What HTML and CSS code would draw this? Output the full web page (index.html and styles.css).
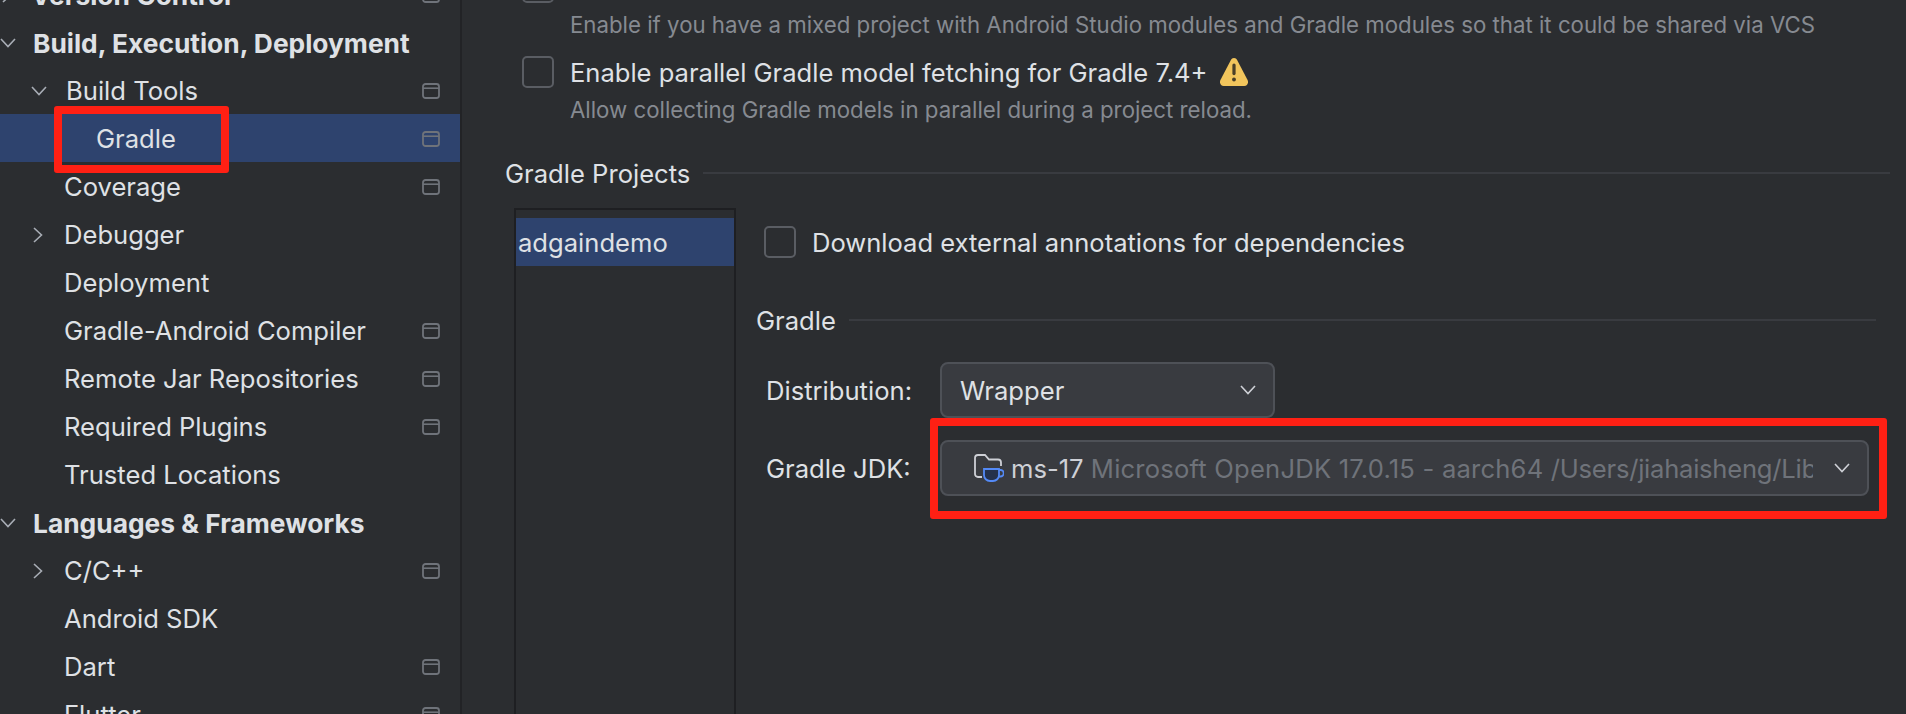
FILE: index.html
```html
<!doctype html>
<html>
  <head>
    <meta charset="UTF-8">
    <title>Settings - Gradle</title>
    <link rel="stylesheet" href="styles.css">
  </head>
  <body>
    <svg class="defs" width="0" height="0">
      <symbol id="chev-down" viewBox="0 0 16 10"><path d="M1 1l7 7.5L15 1" fill="none" stroke="currentColor" stroke-width="1.6"/></symbol>
      <symbol id="chev-right" viewBox="0 0 10 16"><path d="M1 1l7.5 7L1 15" fill="none" stroke="currentColor" stroke-width="1.6"/></symbol>
      <symbol id="scope" viewBox="0 0 18 16"><rect x="1" y="1" width="16" height="14" rx="2.5" fill="none" stroke="currentColor" stroke-width="1.8"/><path d="M1 5.2h16" stroke="currentColor" stroke-width="1.6"/></symbol>
    </svg>

    <nav class="sidebar">
      <div class="tree">
        <div class="row bold"><span class="chev"><svg class="icon-right"><use href="#chev-right"/></svg></span>Version Control<svg class="scope"><use href="#scope"/></svg></div>
        <div class="row bold"><span class="chev"><svg class="icon-down"><use href="#chev-down"/></svg></span>Build, Execution, Deployment</div>
        <div class="row level-1"><span class="chev"><svg class="icon-down"><use href="#chev-down"/></svg></span>Build Tools<svg class="scope"><use href="#scope"/></svg></div>
        <div class="row level-2 selected"><span class="chev"></span>Gradle<svg class="scope"><use href="#scope"/></svg></div>
        <div class="row level-1"><span class="chev"></span>Coverage<svg class="scope"><use href="#scope"/></svg></div>
        <div class="row level-1"><span class="chev"><svg class="icon-right"><use href="#chev-right"/></svg></span>Debugger</div>
        <div class="row level-1"><span class="chev"></span>Deployment</div>
        <div class="row level-1"><span class="chev"></span>Gradle-Android Compiler<svg class="scope"><use href="#scope"/></svg></div>
        <div class="row level-1"><span class="chev"></span>Remote Jar Repositories<svg class="scope"><use href="#scope"/></svg></div>
        <div class="row level-1"><span class="chev"></span>Required Plugins<svg class="scope"><use href="#scope"/></svg></div>
        <div class="row level-1"><span class="chev"></span>Trusted Locations</div>
        <div class="row bold"><span class="chev"><svg class="icon-down"><use href="#chev-down"/></svg></span>Languages &amp; Frameworks</div>
        <div class="row level-1"><span class="chev"><svg class="icon-right"><use href="#chev-right"/></svg></span>C/C++<svg class="scope"><use href="#scope"/></svg></div>
        <div class="row level-1"><span class="chev"></span>Android SDK</div>
        <div class="row level-1"><span class="chev"></span>Dart<svg class="scope"><use href="#scope"/></svg></div>
        <div class="row level-1"><span class="chev"></span>Flutter<svg class="scope"><use href="#scope"/></svg></div>
      </div>
    </nav>

    <main class="content">
      <div class="options">
        <div class="check-row first"><span class="checkbox"></span></div>
        <p class="hint">Enable if you have a mixed project with Android Studio modules and Gradle modules so that it could be shared via VCS</p>
        <div class="check-row spaced">
          <span class="checkbox"></span>
          <span class="check-label">Enable parallel Gradle model fetching for Gradle 7.4+</span>
          <svg class="warning" viewBox="1 1 26 26">
            <path d="M14 1c1.400 0 2.300.8 3 2l9.600 18.500c1.200 2.400-.2 5.500-3 5.500H4.400c-2.800 0-4.200-3.100-3-5.500L11 3c.7-1.200 1.600-2 3-2z" fill="#f2c55c"/>
            <path d="M14 7.500v8" stroke="#4a3f28" stroke-width="3" stroke-linecap="round"/>
            <circle cx="14" cy="21" r="1.800" fill="#4a3f28"/>
          </svg>
        </div>
        <p class="hint">Allow collecting Gradle models in parallel during a project reload.</p>
      </div>

      <h2 class="section-title projects-title">Gradle Projects</h2>

      <div class="projects">
        <div class="project-list">
          <div class="project selected">adgaindemo</div>
        </div>
        <div class="project-settings">
          <div class="check-row external">
            <span class="checkbox"></span>
            <span class="check-label">Download external annotations for dependencies</span>
          </div>
          <h2 class="section-title gradle-title">Gradle</h2>
          <div class="field distribution">
            <label class="field-label">Distribution:</label>
            <div class="combo combo-short">
              <span class="combo-text">Wrapper</span>
              <svg class="combo-arrow"><use href="#chev-down"/></svg>
            </div>
          </div>
          <div class="field jdk">
            <label class="field-label">Gradle JDK:</label>
            <div class="combo combo-wide">
              <svg class="jdk-icon" viewBox="0 0 30 28">
                <path d="M8 23H4a3 3 0 0 1-3-3V4a3 3 0 0 1 3-3h7l4 4.500h9a3 3 0 0 1 3 3V12" fill="none" stroke="#ced0d6" stroke-width="1.800"/>
                <path d="M10 15h15v6a6 6 0 0 1-6 6h-3a6 6 0 0 1-6-6z" fill="#25324d" stroke="#548af7" stroke-width="1.800"/>
                <path d="M25 16h1.500a2.500 2.500 0 0 1 0 6.500H24.500" fill="none" stroke="#548af7" stroke-width="1.800"/>
              </svg>
              <span class="combo-text"><span class="jdk-name">ms-17</span> <span class="jdk-detail">Microsoft OpenJDK 17.0.15 - aarch64 <span class="jdk-path">/Users/jiahaisheng/Library</span></span></span>
              <svg class="combo-arrow"><use href="#chev-down"/></svg>
            </div>
          </div>
        </div>
      </div>
    </main>

    <div class="mark mark-gradle"></div>
    <div class="mark mark-jdk"></div>
  </body>
</html>
```

FILE: styles.css
```css
* {
    box-sizing: border-box;
}

html, body {
    height: 714px;
    margin: 0;
    overflow: hidden;
}

body {
    background: #2b2d30;
    color: #dfe1e5;
    display: flex;
    font-family: Inter, "Liberation Sans", sans-serif;
    font-size: 25.6px;
    position: relative;
}

.defs {
    position: absolute;
}

/* sidebar */
.sidebar {
    border-right: 2px solid #222326;
    flex: 0 0 462px;
    height: 714px;
    overflow: hidden;
}

.tree {
    margin-top: -30px;
}

.row {
    align-items: center;
    display: flex;
    height: 48px;
    padding-right: 20px;
    padding-top: 1px;
}

.row.bold {
    font-size: 26.35px;
    font-weight: 700;
}

.level-1 {
    padding-left: 32px;
}

.level-2 {
    padding-left: 64px;
}

.row.selected, .project.selected {
    background: #2e436e;
}

.chev {
    align-items: center;
    color: #a8adb5;
    display: flex;
    flex: 0 0 14px;
    justify-content: center;
    margin-right: 18px;
}

.bold .chev {
    margin-right: 17px;
}

.level-1 .icon-down, .level-1 .icon-right {
    position: relative;
    left: -1px;
}

.icon-down {
    flex: none;
    height: 10px;
    width: 16px;
}

.icon-right {
    flex: none;
    height: 16px;
    width: 10px;
}

.scope {
    color: #6f737a;
    height: 16px;
    margin-left: auto;
    width: 18px;
}

/* right side */
.content {
    flex: 1;
    min-width: 0;
    padding: 0 16px 0 43px;
}

.options {
    padding-left: 17px;
}

.check-row {
    align-items: center;
    display: flex;
    gap: 16px;
    height: 32px;
}

.check-row.first {
    margin-top: -29px;
}

.check-row.spaced {
    margin-top: 17px;
}

.check-label {
    font-size: 25.55px;
    padding-top: 1px;
}

.checkbox {
    border: 2px solid #5a5d63;
    border-radius: 5px;
    flex: 0 0 32px;
    height: 32px;
}

.warning {
    height: 28px;
    margin-left: -3px;
    width: 28px;
}

.hint {
    color: #868a91;
    font-size: 22.24px;
    line-height: 28px;
    margin: 8px 0 0 48px;
}

.section-title {
    align-items: center;
    display: flex;
    font-size: 25.6px;
    font-weight: 400;
    gap: 13px;
    height: 30px;
    margin: 0;
}

.section-title::after {
    background: #393b40;
    content: "";
    flex: 1;
    height: 2px;
}

.projects-title {
    margin-top: 34px;
}

.projects {
    display: flex;
    margin: 20px 0 0 9px;
}

.project-list {
    border: 2px solid #1e1f22;
    flex: 0 0 222px;
    height: 520px;
    padding-top: 8px;
}

.project {
    align-items: center;
    color: #dfe1e5;
    display: flex;
    height: 48px;
    padding-left: 2px;
    padding-top: 1px;
}

.project-settings {
    flex: 1;
    min-width: 0;
    padding: 18px 14px 0 20px;
}

.external {
    margin-left: 8px;
}

.gradle-title {
    margin-top: 47px;
}

.field {
    align-items: center;
    display: flex;
    padding-left: 10px;
}

.distribution {
    margin-top: 27px;
}

.jdk {
    margin: 22px 7px 0 0;
}

.field-label {
    flex: 0 0 174px;
    padding-top: 1px;
}

.combo {
    align-items: center;
    background: #393b40;
    border: 2px solid #4e5157;
    border-radius: 8px;
    display: flex;
    height: 56px;
}

.combo-short {
    padding-left: 18px;
    width: 335px;
}

.combo-wide {
    flex: 1;
    min-width: 0;
    padding-left: 32px;
}

.combo-text {
    flex: 1;
    min-width: 0;
    overflow: hidden;
    padding-top: 1px;
    white-space: nowrap;
}

.combo-arrow {
    color: #ced0d6;
    flex: none;
    height: 10px;
    margin: 0 17px 0 21px;
    width: 16px;
}

.jdk-icon {
    flex: none;
    height: 28px;
    margin-right: 7px;
    width: 30px;
}

.jdk-name {
    color: #ced0d6;
}

.jdk-detail {
    color: #6f737a;
    letter-spacing: 0.2px;
}

.jdk-path {
    letter-spacing: -0.25px;
}

/* red annotation boxes drawn over the screenshot */
.mark {
    border: 8px solid #ff2014;
    border-radius: 3px;
    position: absolute;
}

.mark-gradle {
    height: 67px;
    left: 54px;
    top: 106px;
    width: 175px;
}

.mark-jdk {
    height: 101px;
    left: 930px;
    top: 418px;
    width: 957px;
}
```
